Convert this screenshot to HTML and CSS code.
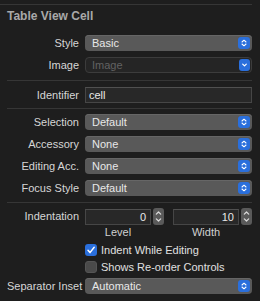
FILE: index.html
```html
<!DOCTYPE html>
<html>
  <head>
    <meta charset="UTF-8" />
    <meta name="viewport" content="width=device-width, initial-scale=1">
    <title>Table View Cell</title>
    <link rel="stylesheet" href="styles.css">
  </head>
  <body>
    <div class="inspector">
      <div class="rule rule-top"></div>
      <h2 class="title">Table View Cell</h2>

      <div class="group group-first">
        <div class="row">
          <span class="label">Style</span>
          <div class="popup">
            <span>Basic</span>
            <svg class="arrows" width="12" height="12" viewBox="0 0 12 12"><rect width="12" height="12" rx="3" fill="#2a6fdc"/><path d="M4 5L6 3.2L8 5M4 7L6 8.8L8 7" fill="none" stroke="#fff" stroke-width="1.1" stroke-linecap="round" stroke-linejoin="round"/></svg>
          </div>
        </div>
        <div class="row">
          <span class="label">Image</span>
          <div class="popup popup-off">
            <span>Image</span>
            <svg class="arrows" width="11" height="12" viewBox="0 0 11 12"><rect width="11" height="12" rx="3" fill="#2a6fdc"/><path d="M3.7 5.1L5.5 6.9L7.3 5.1" fill="none" stroke="#fff" stroke-width="1.2" stroke-linecap="round" stroke-linejoin="round"/></svg>
          </div>
        </div>
      </div>

      <div class="rule rule-a"></div>

      <div class="group group-id">
        <div class="row">
          <span class="label">Identifier</span>
          <div class="field">cell</div>
        </div>
      </div>

      <div class="rule rule-b"></div>

      <div class="group group-mid">
        <div class="row">
          <span class="label">Selection</span>
          <div class="popup">
            <span>Default</span>
            <svg class="arrows" width="12" height="12" viewBox="0 0 12 12"><rect width="12" height="12" rx="3" fill="#2a6fdc"/><path d="M4 5L6 3.2L8 5M4 7L6 8.8L8 7" fill="none" stroke="#fff" stroke-width="1.1" stroke-linecap="round" stroke-linejoin="round"/></svg>
          </div>
        </div>
        <div class="row">
          <span class="label">Accessory</span>
          <div class="popup">
            <span>None</span>
            <svg class="arrows" width="12" height="12" viewBox="0 0 12 12"><rect width="12" height="12" rx="3" fill="#2a6fdc"/><path d="M4 5L6 3.2L8 5M4 7L6 8.8L8 7" fill="none" stroke="#fff" stroke-width="1.1" stroke-linecap="round" stroke-linejoin="round"/></svg>
          </div>
        </div>
        <div class="row">
          <span class="label">Editing Acc.</span>
          <div class="popup">
            <span>None</span>
            <svg class="arrows" width="12" height="12" viewBox="0 0 12 12"><rect width="12" height="12" rx="3" fill="#2a6fdc"/><path d="M4 5L6 3.2L8 5M4 7L6 8.8L8 7" fill="none" stroke="#fff" stroke-width="1.1" stroke-linecap="round" stroke-linejoin="round"/></svg>
          </div>
        </div>
        <div class="row">
          <span class="label">Focus Style</span>
          <div class="popup">
            <span>Default</span>
            <svg class="arrows" width="12" height="12" viewBox="0 0 12 12"><rect width="12" height="12" rx="3" fill="#2a6fdc"/><path d="M4 5L6 3.2L8 5M4 7L6 8.8L8 7" fill="none" stroke="#fff" stroke-width="1.1" stroke-linecap="round" stroke-linejoin="round"/></svg>
          </div>
        </div>
      </div>

      <div class="rule rule-c"></div>

      <div class="group group-indent">
        <div class="row row-top">
          <span class="label">Indentation</span>
          <div class="steppers">
            <div class="stepper-group">
              <div class="field field-num">0</div>
              <svg class="stepper" width="11" height="17" viewBox="0 0 11 17"><rect width="11" height="17" rx="3" fill="#5a5a5a"/><path d="M3.3 6.2L5.5 4L7.7 6.2M3.3 10.8L5.5 13L7.7 10.8" fill="none" stroke="#dcdcdc" stroke-width="1.2" stroke-linecap="round" stroke-linejoin="round"/></svg>
              <span class="caption">Level</span>
            </div>
            <div class="stepper-group">
              <div class="field field-num">10</div>
              <svg class="stepper" width="11" height="17" viewBox="0 0 11 17"><rect width="11" height="17" rx="3" fill="#5a5a5a"/><path d="M3.3 6.2L5.5 4L7.7 6.2M3.3 10.8L5.5 13L7.7 10.8" fill="none" stroke="#dcdcdc" stroke-width="1.2" stroke-linecap="round" stroke-linejoin="round"/></svg>
              <span class="caption">Width</span>
            </div>
          </div>
        </div>
        <div class="row row-check">
          <span class="label"></span>
          <div class="check">
            <svg class="box" width="12" height="12" viewBox="0 0 12 12"><rect width="12" height="12" rx="3" fill="#2a6fdc"/><path d="M3 6.3L5 8.6L9.2 3.3" fill="none" stroke="#fff" stroke-width="1.5" stroke-linecap="round" stroke-linejoin="round"/></svg>
            <span>Indent While Editing</span>
          </div>
        </div>
        <div class="row row-check">
          <span class="label"></span>
          <div class="check">
            <svg class="box" width="12" height="12" viewBox="0 0 12 12"><rect x="0.5" y="0.5" width="11" height="11" rx="2.5" fill="#4a4a4a" stroke="#555" stroke-width="1"/></svg>
            <span>Shows Re-order Controls</span>
          </div>
        </div>
        <div class="row">
          <span class="label">Separator Inset</span>
          <div class="popup">
            <span>Automatic</span>
            <svg class="arrows" width="12" height="12" viewBox="0 0 12 12"><rect width="12" height="12" rx="3" fill="#2a6fdc"/><path d="M4 5L6 3.2L8 5M4 7L6 8.8L8 7" fill="none" stroke="#fff" stroke-width="1.1" stroke-linecap="round" stroke-linejoin="round"/></svg>
          </div>
        </div>
      </div>
    </div>
  </body>
</html>
```

FILE: styles.css
```css
body {
  margin: 0;
  background: #1e1e1e;
  font-family: "Liberation Sans", Arial, sans-serif;
  font-size: 11px;
  color: #d6d6d6;
}

.inspector {
  width: 260px;
  height: 301px;
  overflow: hidden;
}

.rule {
  height: 1px;
  background: #363636;
  margin-left: 7px;
  width: 245px;
}
.rule-top {
  margin: 4px 0 0 0;
  width: 252px;
}
.rule-a {
  margin-top: 7px;
}
.rule-b {
  margin-top: 5px;
}
.rule-c {
  margin-top: 6px;
}

.title {
  margin: 4px 0 0 7px;
  font-size: 12px;
  line-height: 14px;
  font-weight: bold;
  color: #a9a9a9;
}

.group {
  padding: 0 8px 0 7px;
  display: flex;
  flex-direction: column;
  gap: 6px;
}
.group-first {
  margin-top: 12px;
}
.group-id {
  margin-top: 6px;
}
.group-mid {
  margin-top: 5px;
}
.group-indent {
  margin-top: 5px;
  gap: 0;
}

.row {
  display: grid;
  grid-template-columns: 72px 1fr;
  column-gap: 6px;
  align-items: center;
}
.row-top {
  align-items: start;
}
.label {
  text-align: right;
  white-space: nowrap;
  line-height: 16px;
}

.popup {
  box-sizing: border-box;
  height: 16px;
  border-radius: 4px;
  background: #595959;
  box-shadow: inset 0 1px 0 #666;
  display: flex;
  align-items: center;
  justify-content: space-between;
  padding: 0 2px 0 7px;
  color: #e8e8e8;
}
.popup-off {
  background: #252525;
  border: 1px solid #3c3c3c;
  box-shadow: none;
  padding: 0 1px 0 6px;
  color: #626262;
}
.arrows {
  display: block;
}

.field {
  box-sizing: border-box;
  height: 16px;
  background: #282828;
  border: 1px solid #464646;
  border-top-color: #505050;
  padding: 0 3px;
  line-height: 14px;
  color: #e8e8e8;
}
.field-num {
  text-align: right;
  padding-right: 4px;
}

.steppers {
  display: grid;
  grid-template-columns: 1fr 1fr;
  column-gap: 9px;
}
.stepper-group {
  display: grid;
  grid-template-columns: 1fr 11px;
  column-gap: 2px;
  align-items: center;
}
.stepper {
  display: block;
}
.caption {
  text-align: center;
  line-height: 13px;
  margin-top: 1px;
  color: #d0d0d0;
}

.row-check {
  margin-top: 5px;
}
.row-check + .row-check {
  margin-top: 7px;
}
.row-check + .row {
  margin-top: 5px;
}
.check {
  display: flex;
  align-items: center;
  gap: 4px;
  height: 12px;
  color: #e0e0e0;
}
.box {
  display: block;
  flex: none;
}
```
